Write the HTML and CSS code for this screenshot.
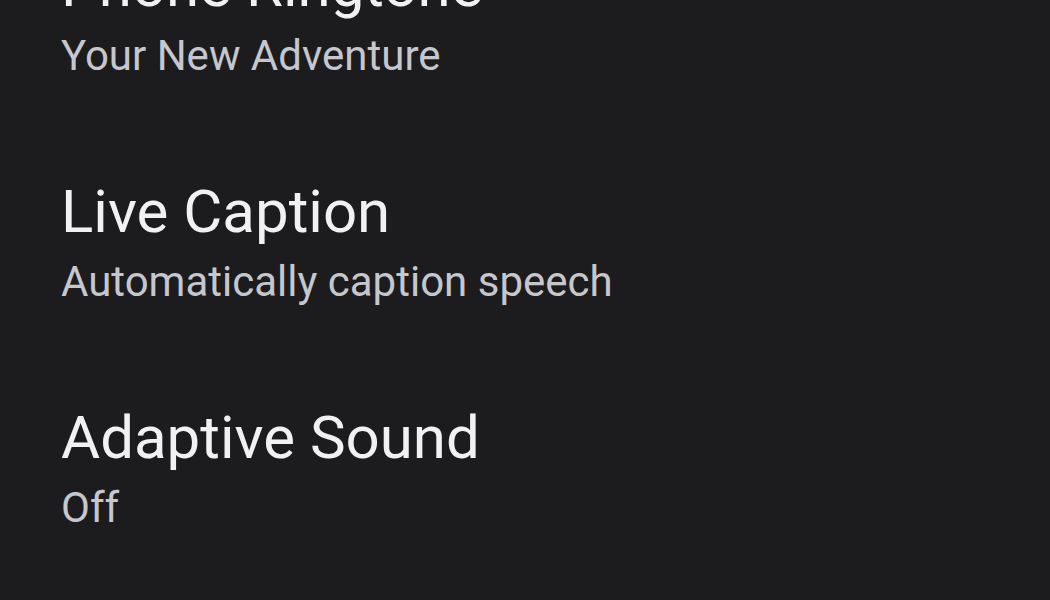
FILE: index.html
```html
<!DOCTYPE html>
<html>
  <head>
    <meta charset="UTF-8">
    <title>Sound settings</title>
    <link rel="stylesheet" href="styles.css">
  </head>
  <body>
    <div class="list">
      <div class="pref">
        <div class="title">Phone Ringtone</div>
        <div class="summary">Your New Adventure</div>
      </div>
      <div class="pref">
        <div class="title">Live Caption</div>
        <div class="summary">Automatically caption speech</div>
      </div>
      <div class="pref">
        <div class="title">Adaptive Sound</div>
        <div class="summary">Off</div>
      </div>
    </div>
  </body>
</html>
```

FILE: styles.css
```css
html, body {
  height: 100%;
}
body {
  margin: 0;
  overflow: hidden;
  background-color: #1c1c1e;
  font-family: Roboto, "Noto Sans", sans-serif;
  -webkit-font-smoothing: antialiased;
}

.list {
  margin-top: -97px;  /* list is scrolled: first row cut off */
  padding-left: 61px;
}
.pref {
  padding: 48px 0 47px;
}
.title {
  font-size: 60px;
  line-height: 70px;
  color: #f1f1f3;
}
.summary {
  margin-top: 9px;
  font-size: 42px;
  line-height: 52px;
  color: #c6c7cd;
}
```
